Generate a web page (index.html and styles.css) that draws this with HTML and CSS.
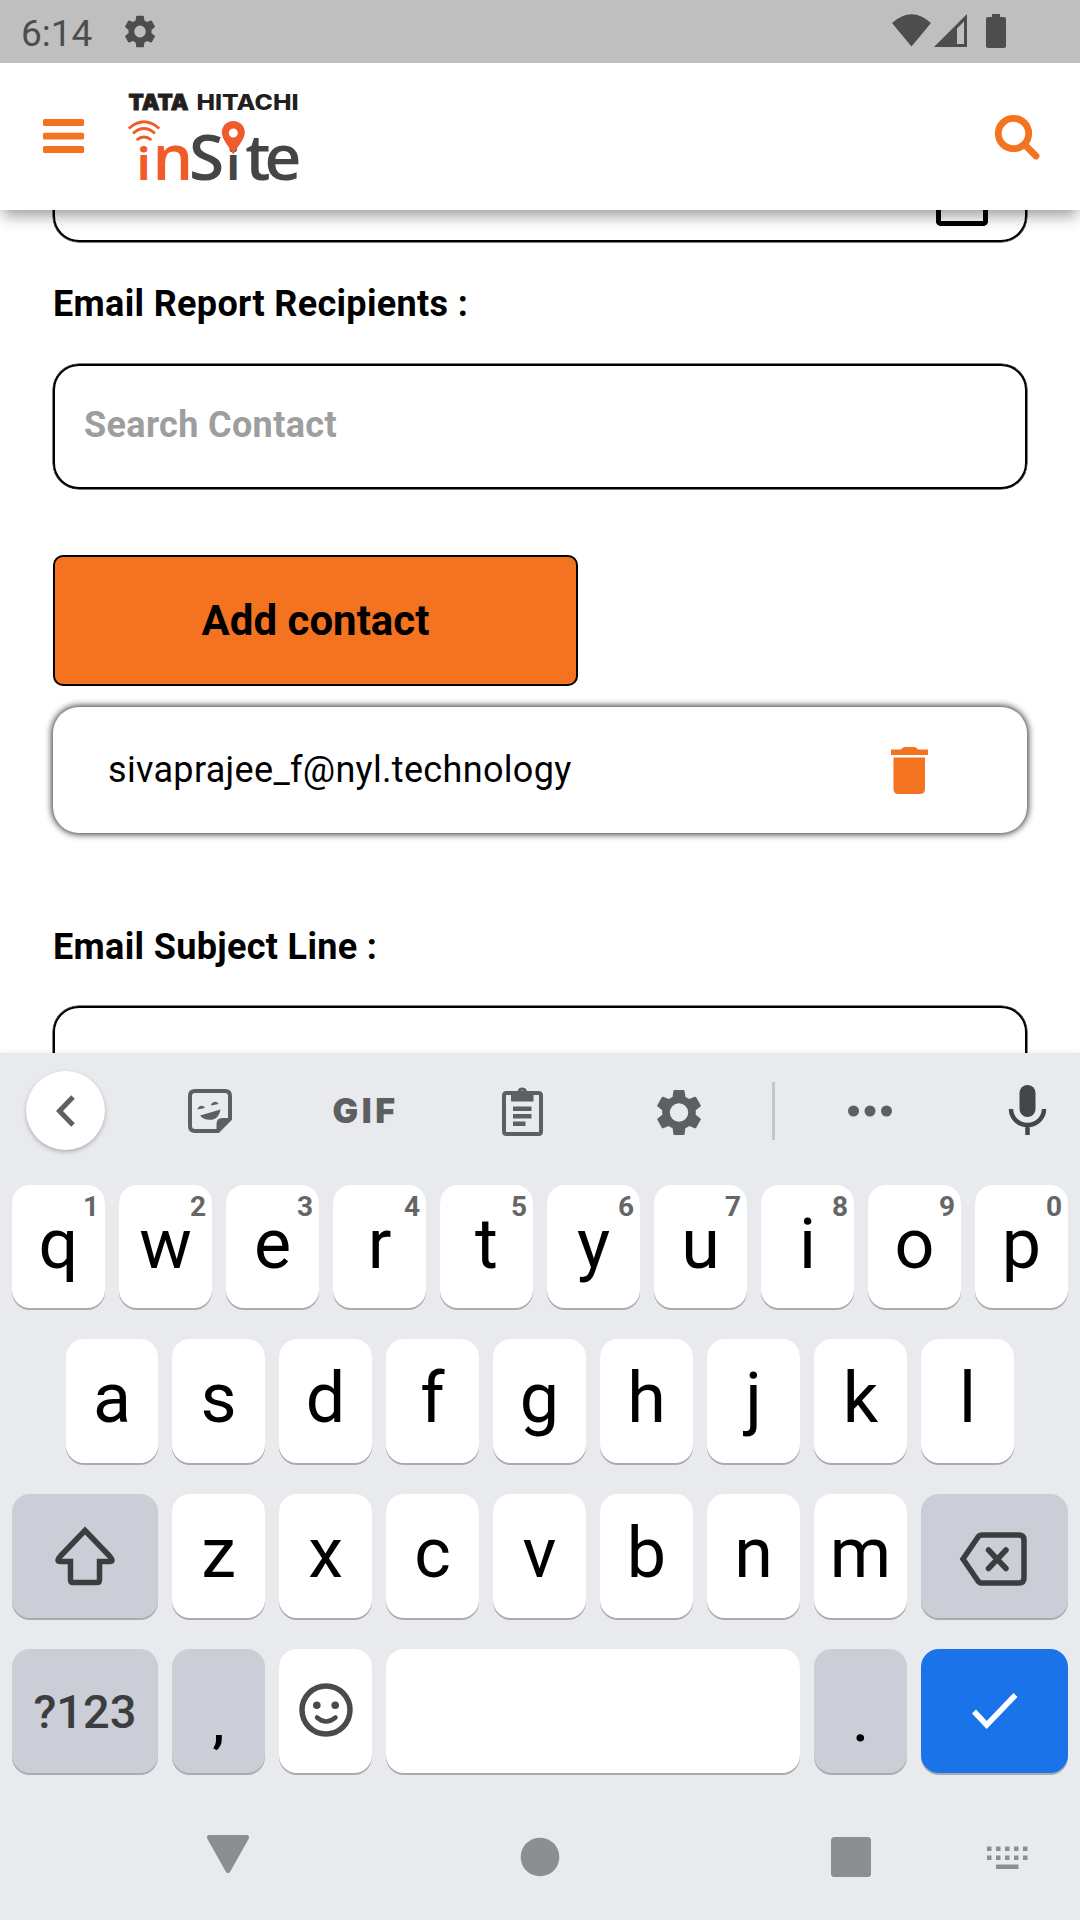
FILE: index.html
```html
<!DOCTYPE html>
<html lang="en">
<head>
<meta charset="utf-8">
<title>Tata Hitachi inSite</title>
<link rel="stylesheet" href="styles.css">
</head>
<body>
<div class="status">
  <span class="clock">6:14</span>
  <svg class="status-gear" viewBox="2 2 20 20" preserveAspectRatio="none"><path d="M19.14 12.94c.04-.3.06-.61.06-.94s-.02-.64-.07-.94l2.03-1.58a.49.49 0 0 0 .12-.61l-1.92-3.32a.49.49 0 0 0-.59-.22l-2.39.96a7 7 0 0 0-1.62-.94l-.36-2.54a.48.48 0 0 0-.48-.41h-3.84a.47.47 0 0 0-.47.41l-.36 2.54c-.59.24-1.13.57-1.62.94l-2.39-.96a.48.48 0 0 0-.59.22L2.74 8.87a.47.47 0 0 0 .12.61l2.03 1.58a6 6 0 0 0 0 1.88l-2.03 1.58a.49.49 0 0 0-.12.61l1.92 3.32c.12.22.37.29.59.22l2.39-.96c.5.38 1.03.7 1.62.94l.36 2.54c.05.24.24.41.48.41h3.84c.24 0 .44-.17.47-.41l.36-2.54c.59-.24 1.13-.56 1.62-.94l2.39.96c.22.08.47 0 .59-.22l1.92-3.32a.47.47 0 0 0-.12-.61zM12 15.6a3.6 3.6 0 1 1 0-7.2 3.6 3.6 0 0 1 0 7.2z"/></svg>
  <svg class="signals" viewBox="0 0 116 36"><path d="M0 9Q19.500-8.500 39 9L19.500 32.500zM42 33 75 0v33zM65 30h7V7.500L65 14.500z" fill-rule="evenodd"/><path d="M100 0h8v3h4q2 0 2 2v27q0 2-2 2H96q-2 0-2-2V5q0-2 2-2h4z"/></svg>
</div>
<header class="appbar">
  <svg class="menu" viewBox="0 0 41 34"><rect width="41" height="7" rx="1.500"/><rect y="13.700" width="41" height="6.800" rx="1.500"/><rect y="27" width="41" height="7" rx="1.500"/></svg>
  <svg class="logo" viewBox="0 0 170 90">
    <text class="tata" x="0.500" y="15.700" textLength="60" lengthAdjust="spacingAndGlyphs">TATA</text>
    <text class="hitachi" x="68.500" y="15.700" textLength="102" lengthAdjust="spacingAndGlyphs">HITACHI</text>
    <g class="waves"><path d="M.8 34.500Q16 21 31.200 34.500"/><path d="M5 39.500Q16 29.500 27 39.500"/><path d="M8.500 46Q16 40 23.500 46"/></g>
    <text class="word orange" y="85.500"><tspan class="small" x="9">i</tspan><tspan x="24.500">n</tspan></text>
    <text class="word" y="85.500"><tspan x="61">S</tspan><tspan class="small" x="98.500">i</tspan><tspan x="117.300">t</tspan><tspan x="136.500">e</tspan></text>
    <path class="pin" fill-rule="evenodd" d="M105.300 27c6.500 0 11.500 5 11.500 11.500C116.800 46 108 54 105.300 60.500 102.600 54 93.800 46 93.800 38.500 93.800 32 98.800 27 105.300 27zm0 7.500a4.500 4.500 0 1 0 0 9 4.500 4.500 0 0 0 0-9z"/>
  </svg>
  <svg class="search" viewBox="0 0 45 45"><circle cx="18.500" cy="18.500" r="15.200"/><path d="M30 30 41 41"/></svg>
</header>
<main class="form">
  <div class="field cut-top"><span class="calendar"></span></div>
  <label class="label first">Email Report Recipients :</label>
  <div class="field search-field">Search Contact</div>
  <button class="add">Add contact</button>
  <div class="contact">
    <span>sivaprajee_f@nyl.technology</span>
    <svg class="trash" viewBox="0 0 37 47"><path d="M0 2.500h10Q11 0 14 0h9q3 0 4 2.500h10V8H0zM2.500 10.500h31.500V42q0 5-5 5H7.500q-5 0-5-5z"/></svg>
  </div>
  <label class="label second">Email Subject Line :</label>
  <div class="field cut-bottom"></div>
</main>
<section class="keyboard">
  <div class="tools">
    <span class="back"><svg viewBox="0 0 20 32"><path d="M17 2 3.500 16 17 30"/></svg></span>
    <svg class="sticker" viewBox="0 0 44 44"><path d="M7 2h30q5 0 5 5v23L30 42H7q-5 0-5-5V7q0-5 5-5z" fill="none" stroke="#5d5f61" stroke-width="4"/><path d="M28.500 43v-8q0-6 6-6H43zM9.500 20.500a4 4 0 0 1 7.500-1.500zM23 16.500a4 4 0 0 1 7.500-1.500zM12 26.500 32.500 20.500C31 28 27 31 21.500 30.800 17.500 30.800 14.500 29.500 12 26.500z"/></svg>
    <svg class="gif" viewBox="0 0 61 25"><text x="-1.500" y="25" textLength="62.500" lengthAdjust="spacing">GIF</text></svg>
    <svg class="clipboard" viewBox="0 0 41 50"><path d="M4.500 7h32q2.500 0 2.500 2.500v36q0 2.500-2.500 2.500h-32Q2 48 2 45.500v-36Q2 7 4.500 7z" fill="none" stroke="#5d5f61" stroke-width="4"/><path fill-rule="evenodd" d="M9 5h6.500a5 5 0 0 1 9.500 0h6.500v10.500H9zm11.300-.5a2.200 2.200 0 1 0 0 4.400 2.200 2.200 0 0 0 0-4.400zM11 20.500h18.500V25H11zm0 7.500h18.500v4.500H11zm0 7.500h12.500V40H11z"/></svg>
    <svg class="gear" viewBox="2.200 2 19.600 20" preserveAspectRatio="none"><path d="M19.430 12.980c.04-.32.07-.64.07-.98s-.03-.66-.07-.98l2.110-1.650c.19-.15.24-.42.12-.64l-2-3.460c-.12-.22-.39-.3-.61-.22l-2.490 1c-.52-.4-1.080-.73-1.690-.98l-.38-2.650C14.460 2.180 14.250 2 14 2h-4c-.25 0-.46.18-.49.42l-.38 2.650c-.61.25-1.170.59-1.690.98l-2.490-1c-.23-.09-.49 0-.61.22l-2 3.460c-.13.22-.07.49.12.64l2.110 1.650c-.04.32-.07.65-.07.98s.03.66.07.98l-2.110 1.650c-.19.15-.24.42-.12.64l2 3.460c.12.22.39.3.61.22l2.490-1c.52.4 1.080.73 1.690.98l.38 2.650c.03.24.24.42.49.42h4c.25 0 .46-.18.49-.42l.38-2.650c.61-.25 1.170-.59 1.690-.98l2.490 1c.23.09.49 0 .61-.22l2-3.460c.12-.22.07-.49-.12-.64zM12 16.100a4.100 4.100 0 1 1 0-8.200 4.100 4.100 0 0 1 0 8.200z"/></svg>
    <span class="divider"></span>
    <svg class="dots" viewBox="0 0 44 12"><circle cx="5.500" cy="6" r="5.500"/><circle cx="22" cy="6" r="5.500"/><circle cx="38.500" cy="6" r="5.500"/></svg>
    <svg class="mic" viewBox="0 0 37 50"><rect x="10.500" width="16" height="32" rx="8"/><path d="M2 24a16.500 16 0 0 0 33 0M18.500 40v10" fill="none" stroke="#444648" stroke-width="4.500"/></svg>
  </div>
  <div class="keys">
    <div class="row top">
      <div class="key">q<sup>1</sup></div><div class="key">w<sup>2</sup></div><div class="key">e<sup>3</sup></div><div class="key">r<sup>4</sup></div><div class="key">t<sup>5</sup></div><div class="key">y<sup>6</sup></div><div class="key">u<sup>7</sup></div><div class="key">i<sup>8</sup></div><div class="key">o<sup>9</sup></div><div class="key">p<sup>0</sup></div>
    </div>
    <div class="row home">
      <div class="key">a</div><div class="key">s</div><div class="key">d</div><div class="key">f</div><div class="key">g</div><div class="key">h</div><div class="key">j</div><div class="key">k</div><div class="key">l</div>
    </div>
    <div class="row">
      <div class="key wide gray"><svg class="shift" viewBox="0 0 60 58"><path d="M30 3.500 54.500 29q5 5.500 0 5.500H44.500V53q0 2.500-2.500 2.500H18q-2.500 0-2.500-2.500V34.500H5.500q-5 0 0-5.500z"/></svg></div>
      <div class="key">z</div><div class="key">x</div><div class="key">c</div><div class="key">v</div><div class="key">b</div><div class="key">n</div><div class="key">m</div>
      <div class="key wide last gray"><svg class="erase" viewBox="0 0 67 54"><path d="M22 3h37q5 0 5 5v38q0 5-5 5H22q-2.500 0-4-2L3 27 18 5q1.500-2 4-2zM28.500 18 46 36.500M46 18 28.500 36.500"/></svg></div>
    </div>
    <div class="row">
      <div class="key wide gray mode">?123</div>
      <div class="key gray punct">,</div>
      <div class="key"><svg class="smile" viewBox="0 0 54 54"><circle cx="27" cy="27" r="24" class="line"/><path d="M18 34.500q9 8 18.500 0" class="line mouth"/><circle cx="17.800" cy="22.300" r="3.800"/><circle cx="36.200" cy="22.300" r="3.800"/></svg></div>
      <div class="key space"></div>
      <div class="key gray punct">.</div>
      <div class="key wide last enter"><svg class="check" viewBox="0 0 46 36"><path d="M2 18.500 14.700 32 43.500 2"/></svg></div>
    </div>
  </div>
  <nav class="nav">
    <svg class="nav-back" viewBox="0 0 42 38"><path d="M2.500 2.500h37L21 35.500z"/></svg>
    <svg class="nav-home" viewBox="0 0 40 40"><circle cx="20" cy="20" r="19.300"/></svg>
    <svg class="nav-recent" viewBox="0 0 40 40"><rect width="40" height="40" rx="3.500"/></svg>
    <svg class="nav-keys" viewBox="0 0 41 24"><path d="M0 .5h4.500V5H0zm9 0h4.500V5H9zm9 0h4.500V5H18zm9 0h4.500V5H27zm9 0h4.500V5H36zM0 9.500h4.500V14H0zm9 0h4.500V14H9zm9 0h4.500V14H18zm9 0h4.500V14H27zm9 0h4.500V14H36zM9 18.500h22.500V23H9z"/></svg>
  </nav>
</section>
</body>
</html>
```

FILE: styles.css
```css
* { box-sizing: border-box; }
body {
  margin: 0;
  width: 1080px;
  height: 1920px;
  overflow: hidden;
  display: flex;
  flex-direction: column;
  background: #fff;
  color: #000;
  font-family: Roboto, sans-serif;
}
svg { display: block; flex: none; overflow: visible; }

.status {
  flex: none;
  height: 63px;
  background: #bfbfbf;
  display: flex;
  align-items: flex-start;
  padding: 0 72px 0 21px;
  color: #4d4d4d;
  fill: #4d4d4d;
}
.clock { width: 103px; font-size: 37px; line-height: 67px; letter-spacing: 0; }
.status-gear { width: 32px; height: 33px; margin-top: 15px; }
.signals { width: 116px; height: 36px; margin: 14px 0 0 auto; }

.appbar {
  flex: none;
  height: 147px;
  position: relative;
  z-index: 1;
  background: #fff;
  box-shadow: 0 9px 14px -3px rgba(0, 0, 0, 0.38);
  clip-path: inset(0 0 -40px 0);
  display: flex;
  align-items: flex-start;
  padding: 0 40px 0 43px;
}
.menu { width: 41px; height: 34px; margin-top: 56px; fill: #f47321; }
.logo { width: 170px; height: 90px; margin: 31px 0 0 44px; }
.tata, .hitachi { font: 900 21px Inter, sans-serif; fill: #231f20; }
.tata { stroke: #231f20; stroke-width: 0.8; }
.hitachi { font-weight: 800; }
.word { font: 600 64px "Open Sans", sans-serif; fill: #444547; }
.orange { fill: #f15a29; }
.small { font-size: 44px; font-weight: 700; }
.waves { fill: none; stroke: #f15a29; stroke-width: 2.8; }
.pin { fill: #f15a29; }
.search {
  width: 45px;
  height: 45px;
  margin: 52px 0 0 auto;
  fill: none;
  stroke: #f47321;
  stroke-width: 6.8;
  stroke-linecap: round;
}

.form {
  flex: none;
  height: 843px;
  overflow: hidden;
  display: flex;
  flex-direction: column;
  padding: 0 53px;
}
.field {
  flex: none;
  border: 2px solid #000;
  box-shadow: 0 0 0 0.5px #000;
  border-radius: 26px;
}
.cut-top {
  height: 32px;
  border-top: 0;
  border-radius: 0 0 26px 26px;
  padding-right: 37px;
  display: flex;
  justify-content: flex-end;
}
.calendar {
  width: 52px;
  height: 16px;
  border: 5px solid #000;
  border-top: 0;
  border-radius: 0 0 5px 5px;
}
.label {
  flex: none;
  font-weight: 700;
  font-size: 36px;
  line-height: 42px;
  letter-spacing: 0.33px;
}
.first { margin-top: 41px; }
.search-field {
  height: 125px;
  margin-top: 39px;
  padding-left: 29px;
  font-weight: 700;
  font-size: 36px;
  line-height: 119px;
  letter-spacing: 0.35px;
  color: #9e9e9e;
}
.add {
  flex: none;
  width: 525px;
  height: 131px;
  margin-top: 66px;
  border: 2px solid #000;
  border-radius: 10px;
  background: #f47321;
  color: #000;
  font: 700 42px Roboto, sans-serif;
}
.contact {
  flex: none;
  height: 126px;
  margin-top: 21px;
  border-radius: 26px;
  box-shadow: 0 0 7px 1px rgba(0, 0, 0, 0.85);
  background: #fff;
  display: flex;
  align-items: center;
  justify-content: space-between;
  padding: 0 99px 0 55px;
  font-size: 36px;
  letter-spacing: 0.32px;
}
.trash { width: 37px; height: 47px; fill: #f47321; }
.second { margin-top: 93px; }
.cut-bottom { height: 125px; margin-top: 38px; }

.keyboard {
  flex: none;
  height: 867px;
  position: relative;
  background: #e8eaed;
  box-shadow: 0 0 6px rgba(0, 0, 0, 0.1);
}
.tools {
  height: 132px;
  display: flex;
  align-items: flex-start;
  padding-left: 26px;
  fill: #5d5f61;
}
.back {
  width: 79px;
  height: 79px;
  margin-top: 18px;
  border-radius: 50%;
  background: #fff;
  box-shadow: 0 2px 4px rgba(0, 0, 0, 0.25);
  display: flex;
  align-items: center;
  justify-content: center;
}
.back svg { width: 20px; height: 32px; fill: none; stroke: #5d5f61; stroke-width: 5; }
.sticker { width: 44px; height: 44px; margin: 36px 0 0 83px; }
.gif { width: 61px; height: 25px; margin: 45px 0 0 102px; }
.gif text { font: 900 34px Inter, sans-serif; }
.clipboard { width: 41px; height: 50px; margin: 33px 0 0 107px; }
.gear { width: 44px; height: 45px; margin: 37px 0 0 114px; }
.divider { width: 3px; height: 58px; margin: 29px 0 0 71px; background: #c4c6c9; }
.dots { width: 44px; height: 12px; margin: 52px 0 0 73px; }
.mic { width: 37px; height: 50px; margin: 32px 0 0 117px; fill: #444648; }

.keys { display: flex; flex-direction: column; gap: 31px; }
.row { display: flex; gap: 14px; padding-left: 12px; }
.top .key { height: 123px; }
.home { padding-left: 66px; }
.home .key:first-child { width: 92px; }
.key {
  position: relative;
  width: 93px;
  height: 124px;
  border-radius: 18px;
  background: #fff;
  box-shadow: 0 2px 0 #a9abae;
  font-size: 70px;
  line-height: 118px;
  text-align: center;
  display: flex;
  justify-content: center;
}
.key sup {
  position: absolute;
  top: 5px;
  right: 6px;
  font-size: 28px;
  font-weight: 700;
  line-height: 33px;
  color: #666;
}
.wide { width: 146px; }
.last { width: 147px; }
.gray { background: #cbced6; }
.mode { font-size: 47px; font-weight: 500; line-height: 126px; color: #3c3d3f; }
.punct { font-size: 56px; font-weight: 500; line-height: 146px; }
.space { width: 414px; }
.enter { background: #1a73e8; }
.shift, .erase { fill: none; stroke: #3c3d3f; stroke-width: 5.5; stroke-linecap: round; }
.shift { width: 60px; height: 58px; margin-top: 33px; }
.erase { width: 67px; height: 54px; margin: 38px 2px 0 0; }
.smile { width: 54px; height: 54px; margin-top: 34px; fill: #4a4a4a; }
.line { fill: none; stroke: #4a4a4a; stroke-width: 5.5; }
.mouth { stroke-width: 4.5; stroke-linecap: round; }
.check { width: 46px; height: 36px; margin-top: 44px; fill: none; stroke: #fff; stroke-width: 5.5; }

.nav { display: flex; align-items: flex-start; padding: 62px 0 0 207px; fill: #8c8e90; }
.nav-back { width: 42px; height: 38px; stroke: #8c8e90; stroke-width: 5; stroke-linejoin: round; }
.nav-home { width: 40px; height: 40px; margin: 2px 0 0 271px; }
.nav-recent { width: 40px; height: 40px; margin: 2px 0 0 271px; }
.nav-keys { width: 41px; height: 24px; margin: 11px 0 0 116px; }
```
